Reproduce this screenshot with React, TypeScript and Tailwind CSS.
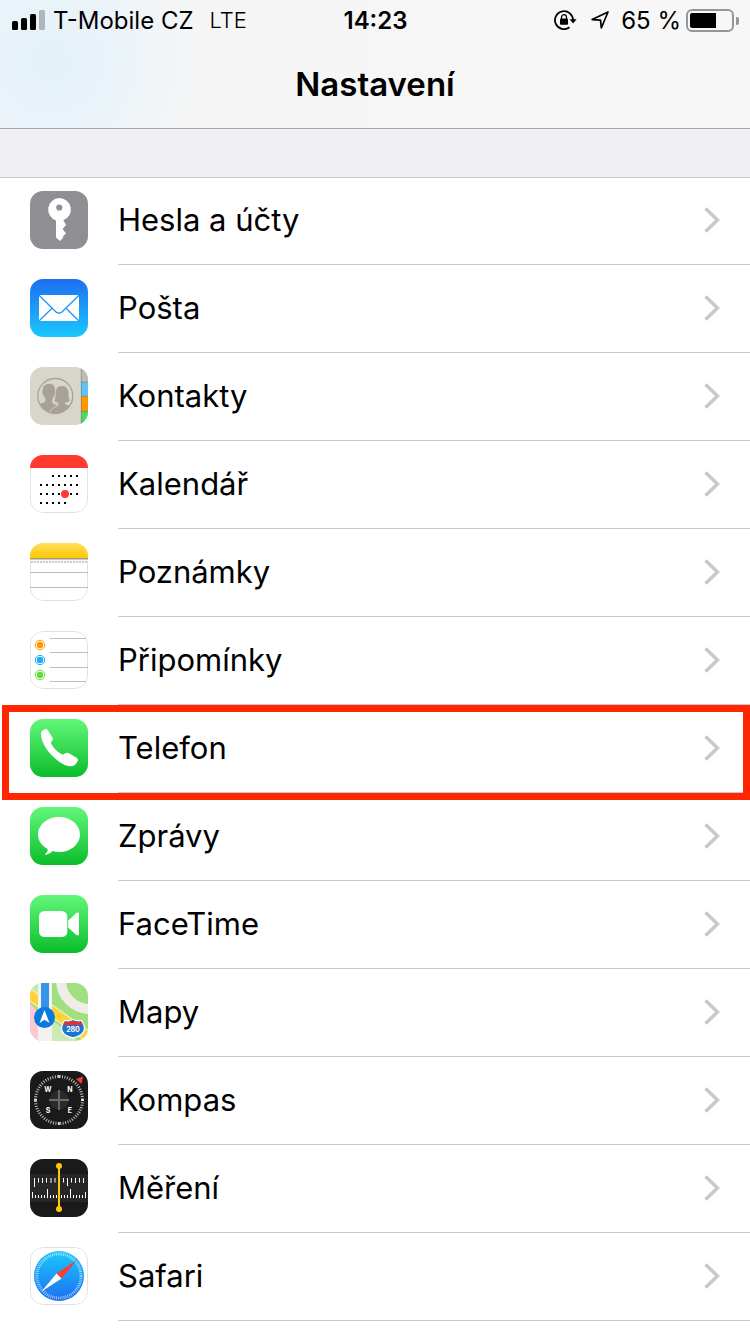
import React from 'react';

interface SettingsItem {
  id: string;
  label: string;
  icon: React.ReactNode;
  highlighted?: boolean;
}

const AppIcon: React.FC<{ id: string; outlined?: boolean; children: React.ReactNode }> = ({ id, outlined, children }) => (
  <svg viewBox="0 0 58 58" className="size-[58px]" aria-hidden="true">
    <defs>
      <clipPath id={`clip-${id}`}>
        <rect width="58" height="58" rx="13" />
      </clipPath>
      <linearGradient id={`green-${id}`} x1="0" y1="0" x2="0" y2="1">
        <stop offset="0" stopColor="#62f77a" />
        <stop offset="1" stopColor="#0bbd29" />
      </linearGradient>
      <linearGradient id={`blue-${id}`} x1="0" y1="0" x2="0" y2="1">
        <stop offset="0" stopColor="#1d6ef2" />
        <stop offset="1" stopColor="#1bc8fd" />
      </linearGradient>
    </defs>
    <g clipPath={`url(#clip-${id})`}>
      {outlined && <rect width="58" height="58" fill="#fff" />}
      {outlined && <rect x="0.5" y="0.5" width="57" height="57" rx="12.5" fill="none" stroke="#e2e2e4" />}
      {children}
    </g>
  </svg>
);

const KeyIcon = () => (
  <AppIcon id="key">
    <rect width="58" height="58" fill="#8e8e93" />
    <path
      fill="#fff"
      fillRule="evenodd"
      d="M29.3 7a11.5 11.5 0 0 1 4 22.3L36 34l-3.4 4 3.400 4.400-3 2.800 0.400 1.300-3.400 3.500-4-3.600V29.400A11.500 11.500 0 0 1 29.300 7Zm0 6.400a3.100 3.100 0 1 0 0 6.200 3.100 3.100 0 0 0 0-6.200Z"
    />
  </AppIcon>
);

const MailIcon = () => (
  <AppIcon id="mail">
    <rect width="58" height="58" fill="url(#blue-mail)" />
    <rect x="9" y="16" width="40" height="26" rx="0.8" fill="#fff" />
    <path d="M9 16.300 24.500 31.500Q29 37 33.500 31.500L49 16.300M9 42 22 29.200M49 42 36 29.200" fill="none" stroke="#1f97f6" strokeWidth="1.300" />
  </AppIcon>
);

const ContactsIcon = () => (
  <AppIcon id="contacts">
    <rect width="58" height="58" fill="#d8d5cb" />
    <rect x="51" width="7" height="15" fill="#c0bcb3" />
    <rect x="51" y="15" width="7" height="14" fill="#5ac4fb" />
    <rect x="51" y="29" width="7" height="15" fill="#ff9500" />
    <rect x="51" y="44" width="7" height="14" fill="#4cd964" />
    <path d="M51 15h7M51 29.3h7M51 44.3h7M51.3 0v58" stroke="#6f6a5c" strokeOpacity="0.6" strokeWidth="0.8" />
    <clipPath id="people">
      <circle cx="25.3" cy="29" r="17.5" />
    </clipPath>
    <g clipPath="url(#people)" fill="#a8a198">
      <path d="M32 19c4.800 0 6.500 3.500 6.500 8 0 3 .5 5.200 1.200 7-1.500 1.200-3.200 1.500-4.700 1.500V37c3 1.500 7 2 9 5v8H18l2-7c2.500-3.500 8.500-4 8.500-6v-1.500c-1.500 0-3-.5-4-1.500.8-1.800 1-4 1-7 0-4.500 1.700-8 6.500-8Z" />
      <path
        stroke="#d8d5cb"
        strokeWidth="0.8"
        d="M19.300 16.500c4.600 0 6.300 2.800 6 7.500.9.300.6 3.300-.7 3.900-.3 2-1.100 3.400-2 4.300v3.300c1 1.700 4.500 2 5.400 3.300-4.500 1.200-8 3-8.500 9.200H4V38c3-2 11-1.700 11-4.500v-2c-.9-.8-1.600-2-2-3.900-1.200-.6-1.500-3.400-.6-3.800-.4-4.700 2.300-7.300 6.900-7.300Z"
      />
    </g>
    <circle cx="25.3" cy="29" r="17.500" fill="none" stroke="#a8a198" strokeWidth="1.300" />
  </AppIcon>
);

const calendarRows = [
  { y: 21, days: [23, 29, 35, 41, 47] },
  { y: 30, days: [11, 17, 23, 29, 35, 41, 47] },
  { y: 39, days: [11, 17, 23, 29, 35, 41, 47] },
  { y: 48, days: [11, 17, 23, 29, 35] }
];

const CalendarIcon = () => (
  <AppIcon id="calendar" outlined>
    <rect width="58" height="13" fill="#ff3b30" />
    {calendarRows.map(row =>
      row.days.map(x => <rect key={`${x}-${row.y}`} x={x - 1} y={row.y - 1} width="2" height="2" />)
    )}
    <circle cx="35" cy="39" r="4" fill="#ff3b30" />
  </AppIcon>
);

const NotesIcon = () => (
  <AppIcon id="notes" outlined>
    <linearGradient id="notesTop" x1="0" y1="0" x2="0" y2="1">
      <stop offset="0" stopColor="#ffdf60" />
      <stop offset="1" stopColor="#fdc900" />
    </linearGradient>
    <rect width="58" height="15" fill="url(#notesTop)" />
    <path d="M0 15.500h58" stroke="#a79a78" />
    <path d="M0 16.500h58" stroke="#c9c9ce" />
    <path d="M1 19h57" stroke="#c8c8ca" strokeWidth="2" strokeDasharray="2 1" />
    <path d="M0 29.500h58M0 44.500h58" stroke="#bdbdc1" />
  </AppIcon>
);

const reminderDots = [
  { y: 14, color: '#ff9500' },
  { y: 29, color: '#1badf8' },
  { y: 44, color: '#63da38' }
];

const RemindersIcon = () => (
  <AppIcon id="reminders" outlined>
    {reminderDots.map(dot => (
      <g key={dot.color} fill={dot.color}>
        <circle cx="10" cy={dot.y} r="3.200" />
        <circle cx="10" cy={dot.y} r="4.700" fill="none" stroke={dot.color} />
      </g>
    ))}
    <path d="M20 7.500h36M20 21.500h38M20 36.500h38M20 50.500h36" stroke="#bdbdc1" />
  </AppIcon>
);

const PhoneIcon = () => (
  <AppIcon id="phone">
    <rect width="58" height="58" fill="url(#green-phone)" />
    <path
      fill="#fff"
      d="M11 14.500C11 11.500 14.500 10 16 10c.9 0 1.300.5 1.800 1.300l4.700 7.400c.8 1.300.4 2-.5 3.100-1 1.100-1.300 2.100-.5 3.400 2.400 4 5.500 7.400 9.700 9.800 1.500.8 2.500.6 3.800-.5 1.500-1.200 2.600-1 4-.3l7.700 4.500c1.300.8 1.600 1.800 1 3.200-1 2.400-3 5.400-7 5.400-5.500 0-13.500-4.800-20.200-12.300C14.500 28.400 11 20.500 11 14.500Z"
    />
  </AppIcon>
);

const MessagesIcon = () => (
  <AppIcon id="messages">
    <rect width="58" height="58" fill="url(#green-messages)" />
    <path
      fill="#fff"
      d="M29 10c11.600 0 21 7.800 21 17.500S40.600 45 29 45c-2.400 0-4.500-.3-6.500-.9-2 2.100-4.400 3.400-7 3.700-.6 0-.7-.5-.3-.8 1.900-1.300 2.600-3 2.400-4.900C12 39 8 33.600 8 27.500 8 17.800 17.400 10 29 10Z"
    />
  </AppIcon>
);

const FaceTimeIcon = () => (
  <AppIcon id="facetime">
    <rect width="58" height="58" fill="url(#green-facetime)" />
    <rect x="9" y="16" width="28.300" height="26" rx="5.500" fill="#fff" />
    <path d="M38.200 25.500 45.500 18.700C47.400 17 49 17.400 49 19.300V38.700c0 1.900-1.600 2.300-3.500.6L38.200 32.500Z" fill="#fff" />
  </AppIcon>
);

const MapsIcon = () => (
  <AppIcon id="maps">
    <rect width="58" height="58" fill="#a0e07e" />
    <circle cx="60" cy="-3" r="29" fill="none" stroke="#f0ede8" strokeWidth="10" />
    <path d="M0 0h8v22L0 14Z" fill="#c8e8b0" />
    <path d="M0 20 16 38v20H0Z" fill="#fcc9d3" />
    <path d="M21 36 48 58H21Z" fill="#cdeab5" />
    <path d="M-2 10 22 28 60 55" fill="none" stroke="#fff2c0" strokeWidth="11" />
    <path d="M-2 10 22 28 60 55" fill="none" stroke="#ffd23c" strokeWidth="9" />
    <path d="M8 0h3v58H8ZM19 0h3v58h-3Z" fill="#f4f2ee" />
    <path d="M11 40h8v18h-8Z" fill="#f4f2ee" />
    <rect x="11" width="8" height="34" fill="#3394ea" />
    <circle cx="14.500" cy="34.500" r="10.500" fill="#0b79dc" />
    <path d="m14.500 27 5 13-5-3.200-5 3.200Z" fill="#fff" />
    <path
      d="M34.500 37.500c3 1 5 .6 8.500-1 3.500 1.600 5.500 2 8.500 1 1.500 3 3 4.500 3 8 0 5.500-5.500 8-11.500 9.500-6-1.500-11.500-4-11.500-9.500 0-3.500 1.500-5 3-8Z"
      fill="#1c75d0"
      stroke="#fff"
      strokeWidth="1.300"
    />
    <path d="M34.900 38.500c3 .8 5.300.4 8.100-1 2.800 1.400 5.100 1.800 8.100 1l1.900 3.500H33Z" fill="#e5332c" />
    <text x="43" y="49" textAnchor="middle" fill="#fff" className="font-[Inter] text-[7px] font-bold">280</text>
  </AppIcon>
);

const CompassIcon = () => (
  <AppIcon id="compass">
    <rect width="58" height="58" fill="#1a1a1b" />
    <circle cx="29" cy="29" r="23.500" fill="none" stroke="#c4c4c4" strokeWidth="3" strokeDasharray="0.950 1.510" />
    <path d="M29 4v3M29 51v3M4 29h3M51 29h3" stroke="#fff" strokeWidth="1.400" />
    <circle cx="29" cy="29" r="9.500" fill="#2b2b2c" />
    <path d="M19 29h20M29 19v20" stroke="#6c6c6c" strokeWidth="1.800" />
    <path d="m46 8 7-2.500-1.500 7.500Z" fill="#fb3b30" />
    <g fill="#fff" textAnchor="middle" className="font-[Inter] text-[7px] font-bold">
      <text x="18" y="21">W</text>
      <text x="40" y="21">N</text>
      <text x="18" y="42">S</text>
      <text x="40" y="42">E</text>
    </g>
  </AppIcon>
);

const MeasureIcon = () => (
  <AppIcon id="measure">
    <rect width="58" height="58" fill="#1a1a1b" />
    <rect y="15" width="58" height="28" fill="#272728" />
    <path
      d="M4.500 19v9M8.500 19v4.500M12.500 19v5M16.500 19v4.500M21 19v5M25 19v4.500M33.500 19v4.500M37.500 19v8M41.500 19v4.500M45.500 19v5M49.500 19v4.500M53.500 19v5"
      stroke="#fff"
    />
    <path
      d="M2.500 39v-6M5.500 39v-3M8.500 39v-3M11.500 39v-3M14.500 39v-3M17.500 39v-9M20.500 39v-3M23.500 39v-3M26.500 39v-3M31.500 39v-3M34.500 39v-3M37.500 39v-3M40.500 39v-9M43.500 39v-3M46.500 39v-3M49.500 39v-3M52.500 39v-3M55.500 39v-6"
      stroke="#fff"
    />
    <path d="M29 7v43" stroke="#ffc90a" strokeWidth="2" />
    <circle cx="29" cy="7" r="3" fill="#ffc90a" />
    <circle cx="29" cy="50" r="3" fill="#ffc90a" />
  </AppIcon>
);

const SafariIcon = () => (
  <AppIcon id="safari" outlined>
    <linearGradient id="safariDial" x1="0" y1="0" x2="0" y2="1">
      <stop offset="0" stopColor="#1bc8fb" />
      <stop offset="1" stopColor="#1d6ff2" />
    </linearGradient>
    <circle cx="29" cy="29" r="25" fill="url(#safariDial)" />
    <circle cx="29" cy="29" r="22" fill="none" stroke="#fff" strokeOpacity="0.750" strokeWidth="3" strokeDasharray="0.700 1.220" />
    <path d="M46.500 13.500 26.500 26.500l5 5Z" fill="#ff3b30" />
    <path d="M11.500 44.500 26.500 26.500l5 5Z" fill="#fff" />
  </AppIcon>
);

const items: SettingsItem[] = [
  { id: 'passwords', label: 'Hesla a účty', icon: <KeyIcon /> },
  { id: 'mail', label: 'Pošta', icon: <MailIcon /> },
  { id: 'contacts', label: 'Kontakty', icon: <ContactsIcon /> },
  { id: 'calendar', label: 'Kalendář', icon: <CalendarIcon /> },
  { id: 'notes', label: 'Poznámky', icon: <NotesIcon /> },
  { id: 'reminders', label: 'Připomínky', icon: <RemindersIcon /> },
  { id: 'phone', label: 'Telefon', icon: <PhoneIcon />, highlighted: true },
  { id: 'messages', label: 'Zprávy', icon: <MessagesIcon /> },
  { id: 'facetime', label: 'FaceTime', icon: <FaceTimeIcon /> },
  { id: 'maps', label: 'Mapy', icon: <MapsIcon /> },
  { id: 'compass', label: 'Kompas', icon: <CompassIcon /> },
  { id: 'measure', label: 'Měření', icon: <MeasureIcon /> },
  { id: 'safari', label: 'Safari', icon: <SafariIcon /> }
];

const StatusBar = () => (
  <div className="grid h-10 grid-cols-[1fr_auto_1fr] items-center pl-3 pr-[11px] text-2xl">
    <div className="flex items-center">
      <svg viewBox="0 0 33 20" className="mr-2 h-5 w-[33px]" aria-hidden="true">
        <rect y="11" width="6" height="9" rx="1.500" />
        <rect x="9" y="8" width="6" height="12" rx="1.500" />
        <rect x="18" y="4" width="6" height="16" rx="1.500" />
        <rect x="27" width="6" height="20" rx="1.500" fill="#aeb8bb" />
      </svg>
      <span className="mt-0.5">T-Mobile CZ</span>
      <span className="ml-4 mt-0.5 text-[22px] font-light">LTE</span>
    </div>
    <span className="mt-0.5 font-semibold">14:23</span>
    <div className="flex items-center justify-end">
      <svg viewBox="0 0 23 20" className="mr-3.5 h-5 w-[23px]" fill="none" stroke="#000" aria-hidden="true">
        <path d="M15.500 17.300A9 9 0 1 1 19 10.500" strokeWidth="1.800" />
        <path d="M15.600 9.300h7l-3.500 4.200Z" fill="#000" stroke="none" />
        <rect x="6" y="8.600" width="8" height="6.200" rx="0.800" fill="#000" stroke="none" />
        <path d="M7.500 9V7.200a2.500 2.500 0 0 1 5 0V9" strokeWidth="1.200" />
      </svg>
      <svg viewBox="0 0 18 18" className="mr-3 size-[18px]" fill="none" stroke="#000" strokeWidth="1.700" strokeLinejoin="round" aria-hidden="true">
        <path d="M17 1 1.200 8.600l8.300.6.8 7.800Z" />
      </svg>
      <span className="mt-0.5">65 %</span>
      <svg viewBox="0 0 53 23" className="ml-[5px] h-[23px] w-[53px]" aria-hidden="true">
        <rect x="1" y="1" width="46" height="21" rx="5" fill="none" stroke="#969696" strokeWidth="2" />
        <path d="M6 4H30V19H6a2 2 0 0 1-2-2V6a2 2 0 0 1 2-2Z" />
        <path d="M50 8a4 4 0 0 1 0 8Z" fill="#969696" />
      </svg>
    </div>
  </div>
);

const SettingsRow: React.FC<{ item: SettingsItem }> = ({ item }) => (
  <li className="relative">
    <a href={`#${item.id}`} className="flex h-[88px] pl-[30px]">
      <div className="pt-3.5">{item.icon}</div>
      <div className="ml-[30px] flex flex-1 items-center justify-between border-b border-[#c8c7cc] pb-0.5 pr-[30px]">
        <span className="text-[31px] leading-10">{item.label}</span>
        <svg viewBox="0 0 16 26" className="h-[26px] w-4" fill="none" stroke="#c7c7cc" strokeWidth="3.500" aria-hidden="true">
          <path d="M1.500 1.500 13.500 13 1.500 24.500" />
        </svg>
      </div>
    </a>
    {item.highlighted && (
      <div className="pointer-events-none absolute left-0.5 right-0 top-0 z-10 h-[95px] border-[7px] border-[#ff2600]"></div>
    )}
  </li>
);

const App: React.FC = () => {
  return (
    <div className="min-h-screen bg-white font-[Inter,sans-serif] text-black">
      <header className="border-b border-[#a8a8ac] bg-[#f7f7f7] bg-[radial-gradient(circle_at_50px_60px,#e3f2f7_0px,#e9f3fa_60px,#f1f5f7_110px,#f5f5f5_160px,transparent_500px)]">
        <StatusBar />
        <h1 className="h-[88px] pt-6 text-center text-[33px] font-semibold leading-10">Nastavení</h1>
      </header>
      <div className="h-[49px] border-b border-[#c8c7cc] bg-[#efeff4]"></div>
      <ul className="-mt-px">
        {items.map(item => (
          <SettingsRow key={item.id} item={item} />
        ))}
      </ul>
    </div>
  );
};

export default App;
